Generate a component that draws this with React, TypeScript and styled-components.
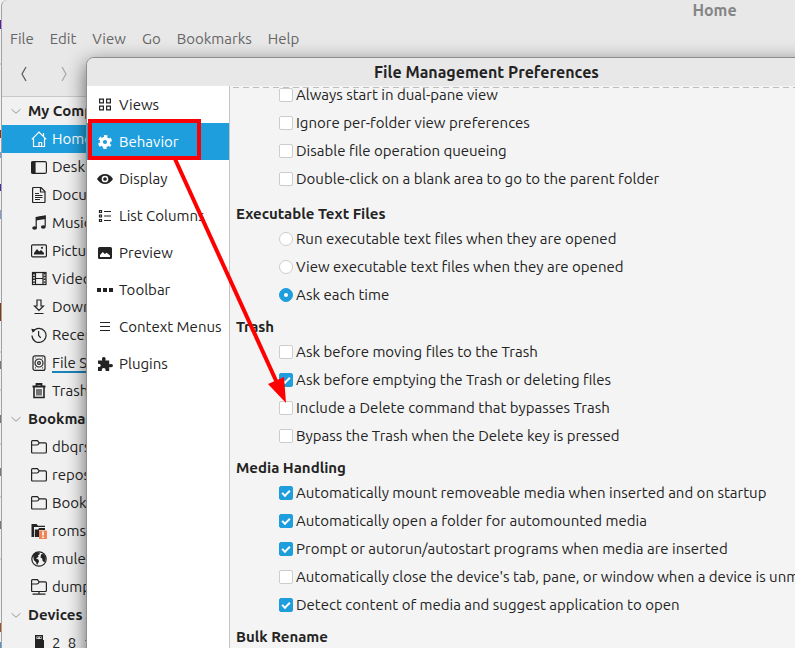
import React from "react";
import styled, { createGlobalStyle } from "styled-components";

const ACCENT = "#1f9ede";
const INK = "#232323";

const GlobalStyle = createGlobalStyle`
  *, *::before, *::after { box-sizing: border-box; }
  body {
    margin: 0;
    background: #f0f0f0;
    color: ${INK};
    font-family: Ubuntu, "Noto Sans", "Open Sans", sans-serif;
    font-size: 15px;
    line-height: 18px;
  }
  button { font: inherit; color: inherit; border: 0; padding: 0; background: none; }
  ul { list-style: none; margin: 0; padding: 0; }
`;

const Desktop = styled.div`
  position: relative;
  height: 100vh;
  overflow: hidden;
`;

const Backdrop = styled.svg`
  display: block;
`;

/* ---------- file manager window ---------- */

const ManagerWindow = styled.main`
  position: absolute;
  top: 0;
  bottom: 0;
  left: 1px;
  right: -632px;
  display: flex;
  flex-direction: column;
  background: #e8e8e8;
  border-left: 1px solid #a2a2a2;
  border-top-left-radius: 6px;
`;

const ManagerTitle = styled.h1`
  margin: 0;
  height: 22px;
  font-size: 16px;
  line-height: 20px;
  font-weight: 600;
  text-align: center;
  color: #858585;
`;

const MenuBar = styled.nav`
  display: flex;
  align-items: center;
  gap: 16px;
  height: 34px;
  padding-left: 8px;
  color: #666666;
`;

const ToolBar = styled.div`
  display: flex;
  align-items: center;
  gap: 24px;
  height: 41px;
  padding: 0 0 4px 14px;
  border-bottom: 1px solid #c9c9c9;
`;

const ToolButton = styled.button`
  display: flex;
  width: 16px;
  height: 16px;
  color: #555555;
  &:disabled { color: #a6a6a6; }
`;

const Sidebar = styled.aside`
  flex: 1;
  min-height: 0;
  width: 220px;
  background: #f1f1f1;
  overflow: hidden;
`;

const PlaceHeading = styled.h2`
  display: flex;
  align-items: center;
  gap: 6px;
  height: 28px;
  margin: 0;
  padding-left: 8px;
  font-size: 15px;
  font-weight: 700;
  svg { color: #8c8c8c; width: 12px; height: 12px; }
`;

const PlaceLink = styled.a<{ $active?: boolean; $marked?: boolean }>`
  display: flex;
  align-items: center;
  gap: 5px;
  height: 28px;
  padding-left: 29px;
  text-decoration: none;
  color: ${(p) => (p.$active ? "#ffffff" : INK)};
  background: ${(p) => (p.$active ? ACCENT : "transparent")};
  span { box-shadow: ${(p) => (p.$marked ? "0 1px 0 #1c84b8, inset 0 -1px 0 #1c84b8" : "none")}; }
`;

/* ---------- preferences dialog ---------- */

const Dialog = styled.section`
  position: absolute;
  top: 57px;
  bottom: -40px;
  left: 86px;
  right: -92px;
  display: flex;
  flex-direction: column;
  background: #f4f4f4;
  border: 1px solid #8e8e8e;
  border-radius: 8px 8px 0 0;
  overflow: hidden;
  box-shadow: 0 6px 20px rgba(0, 0, 0, 0.6);
`;

const DialogTitle = styled.h2`
  margin: 0;
  height: 28px;
  font-size: 16px;
  line-height: 28px;
  font-weight: 600;
  text-align: center;
  background: #e8e8e8;
`;

const DialogBody = styled.div`
  flex: 1;
  min-height: 0;
  display: flex;
`;

const Categories = styled.nav`
  width: 143px;
  flex: none;
  background: #ffffff;
  border-right: 1px solid #c4c4c4;
`;

const CategoryButton = styled.button<{ $active?: boolean }>`
  display: flex;
  align-items: center;
  gap: 6px;
  width: 100%;
  height: 37px;
  padding-left: 10px;
  white-space: nowrap;
  color: ${(p) => (p.$active ? "#ffffff" : INK)};
  background: ${(p) => (p.$active ? ACCENT : "transparent")};
`;

const Options = styled.form`
  position: relative;
  flex: 1;
  min-width: 0;
  padding-left: 6px;
  display: flex;
  flex-direction: column;
  gap: 14px;
`;

const ScrollEdge = styled.div`
  position: absolute;
  top: 1px;
  left: 3px;
  right: 0;
  height: 1px;
  background: repeating-linear-gradient(90deg, #bdbdbd 0 6px, transparent 6px 10px);
`;

const OptionGroup = styled.fieldset<{ $spaced?: boolean }>`
  min-width: 0;
  margin: 0;
  padding: 0 0 ${(p) => (p.$spaced ? "3px" : "0")};
  border: 0;
`;

const OptionLegend = styled.legend`
  padding: 0;
  margin-bottom: 7px;
  font-weight: 700;
`;

const OptionList = styled.div`
  display: flex;
  flex-direction: column;
  gap: 10px;
  padding-left: 43px;
`;

const Option = styled.label`
  display: flex;
  align-items: center;
  gap: 3px;
  white-space: nowrap;
`;

const Toggle = styled.input`
  appearance: none;
  flex: none;
  width: 14px;
  height: 14px;
  margin: 0;
  display: grid;
  place-items: center;
  background: #ffffff;
  border: 1px solid #cdcdcd;
  border-radius: ${(p) => (p.type === "radio" ? "50%" : "2px")};
  &:checked { background: ${ACCENT}; border-color: ${ACCENT}; }
  &[type="radio"]:checked::after {
    content: "";
    width: 4px;
    height: 4px;
    border-radius: 50%;
    background: #ffffff;
  }
  &[type="checkbox"]:checked::after {
    content: "";
    width: 8px;
    height: 5px;
    margin-bottom: 2px;
    border: solid #ffffff;
    border-width: 0 0 2px 2px;
    transform: rotate(-45deg);
  }
`;

/* ---------- annotation ---------- */

const Highlight = styled.div`
  position: absolute;
  top: 119px;
  left: 88px;
  width: 113px;
  height: 41px;
  border: 4px solid #fb0007;
  pointer-events: none;
`;

const Arrow = styled.svg`
  position: absolute;
  top: 158px;
  left: 168px;
  pointer-events: none;
`;

/* ---------- icons ---------- */

const shapes: Record<string, React.ReactNode> = {
  down: <path d="M2 5.500 8 11 14 5.500" />,
  back: <path d="M10 1 6 8l4 7" />,
  forward: <path d="M6 1l4 7-4 7" />,
  home: <path d="M.8 8.400 8 1.200l7.200 7.200M2.500 7.500v8h11v-8M8 15.500v-4h2.600v4M12.500 5V2" />,
  desktop: (
    <>
      <rect x=".6" y="2.6" width="14.8" height="11.8" rx="1.5" />
      <path d="M1 3h3v11H1z" fill="currentColor" />
    </>
  ),
  document: (
    <>
      <path d="M1.600 1.500q0-1 1-1H10l4 4v10.200q0 1-1 1H2.600q-1 0-1-1z" />
      <path d="M9.500 1v4H14M4 6.500H8M4 8.500h7.500M4 10.500h7.500M4 12.500h5" />
    </>
  ),
  music: (
    <>
      <path d="M5.2 13V2.5l9-1.500v10.500" />
      <path d="M5 2.2 14.5.8V4L5 5.4z" fill="currentColor" stroke="none" />
      <ellipse cx="3.6" cy="13" rx="2.4" ry="1.8" fill="currentColor" stroke="none" />
      <ellipse cx="12.3" cy="12" rx="2.4" ry="1.8" fill="currentColor" stroke="none" />
    </>
  ),
  pictures: (
    <>
      <rect x=".6" y="1.8" width="14.8" height="12" rx="1" />
      <path d="M3 11.5V10l3-4 2.2 2.4L10 7l3 3v1.5z" fill="currentColor" stroke="none" />
      <circle cx="11" cy="4.8" r="1.1" fill="currentColor" stroke="none" />
    </>
  ),
  videos: (
    <>
      <rect x="1.5" y="1.5" width="13.5" height="12" />
      <path d="M4.5 1.5v12M12 1.5v12M4.5 7.500H12" />
      <path d="M2.9 2v11M13.600 2v11" strokeWidth="2" strokeDasharray="1.4 1.4" />
    </>
  ),
  download: <path d="M6 1h4v6h2.500L8 11.500 3.500 7H6zM3.500 14.500h9" />,
  recent: (
    <>
      <path d="M2.2 4.5A7 7 0 1 1 1 8.5M7.6 4v4.5l2.2 2.3" />
      <path d="M.3 1.8 4.8 2.6 1.6 5.8z" fill="currentColor" stroke="none" />
    </>
  ),
  disk: (
    <>
      <rect x="2" y=".8" width="12" height="14.6" rx="2" />
      <circle cx="8" cy="8" r="4" />
      <circle cx="8" cy="8" r="1.4" />
      <path d="M4 12.8h.8M11.200 12.800h.8M4 3h.8M11.200 3h.8" />
    </>
  ),
  trash: (
    <>
      <path d="M1.500 3.500h13M5.500 3v-2h5v2" strokeWidth="1.8" />
      <path d="M3 4v10.500h10V4" strokeWidth="1.6" />
      <path d="M6 6v6.500M8 6v6.500M10 6v6.500" />
    </>
  ),
  folder: <path d="M.6 13V2.6q0-1 1-1h4.800l1.800 2.200h6q1.200 0 1.200 1.200V13q0 1-1 1H1.600q-1 0-1-1zM.8 6H6q1.200 0 2.200-2" />,
  netFolder: <path d="M.6 11.5V1.6q0-1 1-1h4.800l1.800 2.200h6q1.200 0 1.200 1.200v7.500q0 1-1 1H1.600q-1 0-1-1zM.8 5H6q1.200 0 2.200-2M1.500 15.200h13M8 12.500V15" />,
  brokenFolder: (
    <>
      <path d="M.5 14V1h5l1.500 1.800h7V4H3v10z" fill="currentColor" stroke="none" />
      <path d="M3.800 14V6.500H7L8.200 5H14v2H8v7z" fill="currentColor" stroke="none" />
      <rect x="8" y="7.5" width="8" height="8.5" fill="#f08452" stroke="none" />
      <path d="M12 8.500v4M12 13.500v1.500" stroke="#ffffff" strokeWidth="1.6" />
    </>
  ),
  globe: (
    <>
      <circle cx="8" cy="8" r="7.2" />
      <path d="M2 4 4.5 1.5 8 1.3 9 3 7 4.2 7.5 6 5 7.2l2.6 1.6L8 10.5l-2 3.8-1-3L2.8 9zM10.5 3 13 3.2l1.8 4-1.2 4.3-2-1.5-.4-2.4-1.7-1 .4-2.4z" fill="currentColor" stroke="none" />
    </>
  ),
  usb: (
    <path
      d="M4 0h8v5h1v7.500q0 3-3 3H7q-3 0-3-3V5zM5.500 1.500V4h5V1.500zM6.200 2h1.200v1.200H6.200zM8.800 2H10v1.200H8.800z"
      fill="currentColor"
      fillRule="evenodd"
      stroke="none"
    />
  ),
  grid: <path d="M2.600 2.100h3.800v3.800H2.600zM9.600 2.100h3.800v3.800H9.600zM2.600 9.100h3.800v3.800H2.600zM9.600 9.100h3.800v3.800H9.600z" strokeWidth="1.2" />,
  gear: (
    <>
      <circle cx="8" cy="8" r="3.7" strokeWidth="3.2" />
      <circle cx="8" cy="8" r="5.7" strokeWidth="2.6" strokeDasharray="3.2 2.77" strokeDashoffset="1.6" transform="rotate(30 8 8)" />
    </>
  ),
  eye: (
    <>
      <path d="M0 8Q3.200 3 8 3t8 5q-3.200 5-8 5T0 8z" fill="currentColor" stroke="none" />
      <circle cx="8" cy="8" r="2.600" stroke="#ffffff" strokeWidth="1.5" fill="currentColor" />
    </>
  ),
  list: <path d="M2.500 2.500h2v2h-2zM2.500 7h2v2h-2zM2.500 11.500h2v2h-2zM7 3.500h7M7 8h7M7 12.500h7" />,
  image: (
    <>
      <rect x="1" y="2" width="14" height="12" rx="1.500" fill="currentColor" stroke="none" />
      <path d="M3 12v-2l2.800-3 2 2 2-1.200 3.200 2.700V12z" fill="#ffffff" stroke="none" />
    </>
  ),
  dots: <path d="M0 6h4v4H0zM6 6h4v4H6zM12 6h4v4h-4z" fill="currentColor" stroke="none" />,
  lines: <path d="M3 3.500h10M3 7.500h10M3 11.500h10" />,
  puzzle: (
    <path
      d="M1 4.500h4.200Q4.300 1 6.800 1t1.600 3.500h3.800v3.700q3.800-1 3.800 1.300t-3.800 1.400V15H8.600q.3-3-1.900-3t-1.900 3H1v-4q2.800.2 2.800-1.600T1 7.800z"
      fill="currentColor"
      stroke="none"
    />
  ),
};

const Glyph = styled.svg`
  width: 16px;
  height: 16px;
  flex: none;
  fill: none;
  stroke: currentColor;
  stroke-width: 1.2;
`;

const Icon = ({ name }: { name: string }) => (
  <Glyph viewBox="0 0 16 16" aria-hidden="true">
    {shapes[name]}
  </Glyph>
);

/* ---------- data ---------- */

const menus = ["File", "Edit", "View", "Go", "Bookmarks", "Help"];

const places = [
  {
    title: "My Computer",
    items: [
      ["home", "Home"],
      ["desktop", "Desktop"],
      ["document", "Documents"],
      ["music", "Music"],
      ["pictures", "Pictures"],
      ["videos", "Videos"],
      ["download", "Downloads"],
      ["recent", "Recent"],
      ["disk", "File System"],
      ["trash", "Trash"],
    ],
  },
  {
    title: "Bookmarks",
    items: [
      ["folder", "dbqrs"],
      ["folder", "repos"],
      ["folder", "Books"],
      ["brokenFolder", "roms"],
      ["globe", "mule"],
      ["netFolder", "dump"],
    ],
  },
  { title: "Devices", items: [["usb", "2_8_1"]] },
];

const categories = [
  ["grid", "Views"],
  ["gear", "Behavior"],
  ["eye", "Display"],
  ["list", "List Columns"],
  ["image", "Preview"],
  ["dots", "Toolbar"],
  ["lines", "Context Menus"],
  ["puzzle", "Plugins"],
];

type Group = { title?: string; radio?: boolean; options: [string, boolean][] };

const groups: Group[] = [
  {
    options: [
      ["Always start in dual-pane view", false],
      ["Ignore per-folder view preferences", false],
      ["Disable file operation queueing", false],
      ["Double-click on a blank area to go to the parent folder", false],
    ],
  },
  {
    title: "Executable Text Files",
    radio: true,
    options: [
      ["Run executable text files when they are opened", false],
      ["View executable text files when they are opened", false],
      ["Ask each time", true],
    ],
  },
  {
    title: "Trash",
    options: [
      ["Ask before moving files to the Trash", false],
      ["Ask before emptying the Trash or deleting files", true],
      ["Include a Delete command that bypasses Trash", false],
      ["Bypass the Trash when the Delete key is pressed", false],
    ],
  },
  {
    title: "Media Handling",
    options: [
      ["Automatically mount removeable media when inserted and on startup", true],
      ["Automatically open a folder for automounted media", true],
      ["Prompt or autorun/autostart programs when media are inserted", true],
      ["Automatically close the device's tab, pane, or window when a device is unmounted", false],
      ["Detect content of media and suggest application to open", true],
    ],
  },
  { title: "Bulk Rename", options: [] },
];

export default function App() {
  return (
    <Desktop>
      <GlobalStyle />
      <Backdrop width="2" height="648" aria-hidden="true">
        <path d="M0 20h2v9H0z" fill="#5a1fb0" />
        <path d="M0 64h2M0 352h2M0 390h2M0 444h2M0 497h2M0 559h2" stroke="#b5b5b5" />
        <path d="M0 130h2v8H0z" fill="#7a3a1c" />
        <path d="M0 152h2v6H0zM0 210h2v9H0z" fill="#7f9fd0" />
        <path d="M0 184h2v7H0z" fill="#4a2aa8" />
        <path d="M0 303h2v18H0z" fill="#8a3a08" />
        <path d="M0 361h2v8H0zM0 415h2v8H0zM0 468h2v8H0zM0 521h2v8H0z" fill="#777777" />
        <path d="M0 623h2v9H0z" fill="#a85020" />
        <path d="M0 642h2v6H0z" fill="#4c92d8" />
      </Backdrop>

      <ManagerWindow>
        <ManagerTitle>Home</ManagerTitle>
        <MenuBar aria-label="Menu">
          {menus.map((m) => (
            <button key={m} type="button">{m}</button>
          ))}
        </MenuBar>
        <ToolBar>
          <ToolButton type="button" aria-label="Back"><Icon name="back" /></ToolButton>
          <ToolButton type="button" aria-label="Forward" disabled><Icon name="forward" /></ToolButton>
        </ToolBar>
        <Sidebar>
          {places.map((group) => (
            <section key={group.title}>
              <PlaceHeading><Icon name="down" />{group.title}</PlaceHeading>
              <ul>
                {group.items.map(([icon, label]) => (
                  <li key={label}>
                    <PlaceLink href="#" $active={label === "Home"} $marked={label === "File System"}>
                      <Icon name={icon} />
                      <span>{label}</span>
                    </PlaceLink>
                  </li>
                ))}
              </ul>
            </section>
          ))}
        </Sidebar>
      </ManagerWindow>

      <Dialog role="dialog" aria-labelledby="dialog-title">
        <DialogTitle id="dialog-title">File Management Preferences</DialogTitle>
        <DialogBody>
          <Categories aria-label="Categories">
            {categories.map(([icon, label]) => (
              <CategoryButton key={label} type="button" $active={label === "Behavior"}>
                <Icon name={icon} />
                {label}
              </CategoryButton>
            ))}
          </Categories>
          <Options>
            <ScrollEdge />
            {groups.map((group, i) => (
              <OptionGroup key={i} $spaced={!group.title}>
                {group.title && <OptionLegend>{group.title}</OptionLegend>}
                <OptionList>
                  {group.options.map(([label, on]) => (
                    <Option key={label}>
                      <Toggle
                        type={group.radio ? "radio" : "checkbox"}
                        name={group.radio ? "executable" : undefined}
                        defaultChecked={on}
                      />
                      {label}
                    </Option>
                  ))}
                </OptionList>
              </OptionGroup>
            ))}
          </Options>
        </DialogBody>
      </Dialog>

      <Highlight />
      <Arrow width="124" height="250" aria-hidden="true">
        <path d="M7 1 110 227" stroke="#ff0000" strokeWidth="4" />
        <path d="M118 245 100 226 116 219z" fill="#ff0000" />
      </Arrow>
    </Desktop>
  );
}
